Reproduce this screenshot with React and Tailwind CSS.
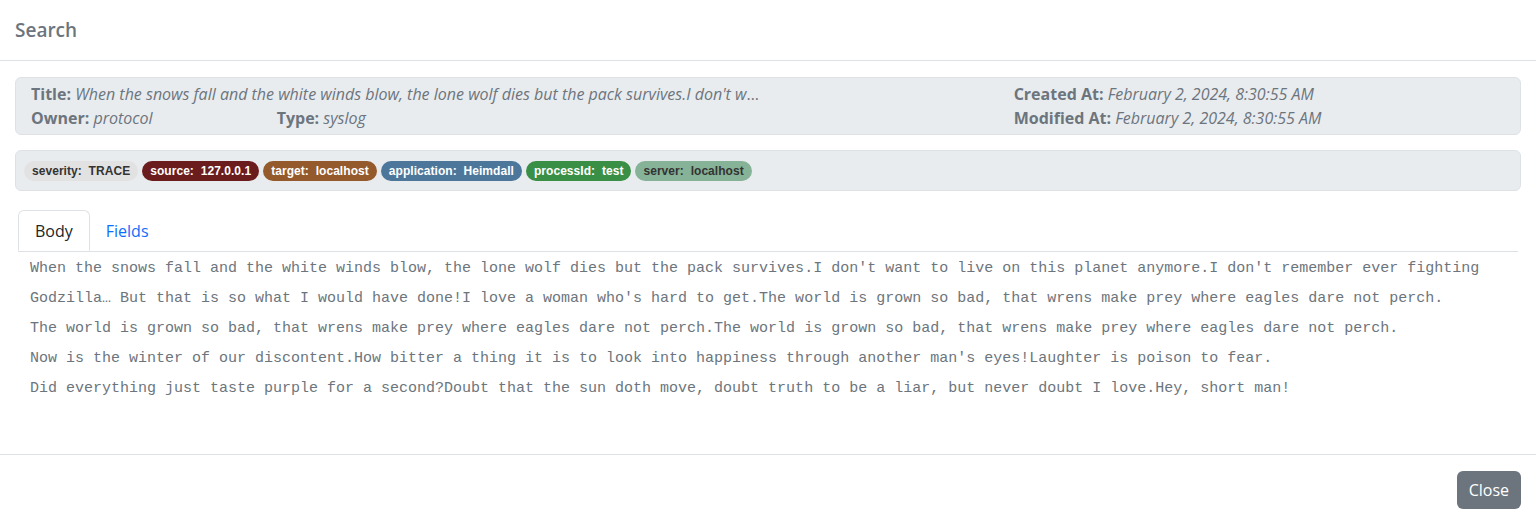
import React from 'react';

const tags = [
  { key: 'severity', value: 'TRACE', cls: 'bg-[#e2e2e2] text-[#333]' },
  { key: 'source', value: '127.0.0.1', cls: 'bg-[#6b1c1c] text-white' },
  { key: 'target', value: 'localhost', cls: 'bg-[#955a2c] text-white' },
  { key: 'application', value: 'Heimdall', cls: 'bg-[#4c779b] text-white' },
  { key: 'processId', value: 'test', cls: 'bg-[#3a8f46] text-white' },
  { key: 'server', value: 'localhost', cls: 'bg-[#86b297] text-[#333]' },
];

const bodyLines = [
  "When the snows fall and the white winds blow, the lone wolf dies but the pack survives.I don't want to live on this planet anymore.I don't remember ever fighting",
  "Godzilla\u2026 But that is so what I would have done!I love a woman who's hard to get.The world is grown so bad, that wrens make prey where eagles dare not perch.",
  'The world is grown so bad, that wrens make prey where eagles dare not perch.The world is grown so bad, that wrens make prey where eagles dare not perch.',
  "Now is the winter of our discontent.How bitter a thing it is to look into happiness through another man's eyes!Laughter is poison to fear.",
  'Did everything just taste purple for a second?Doubt that the sun doth move, doubt truth to be a liar, but never doubt I love.Hey, short man!',
];

const App = () => {
  return (
    <div className="w-[1536px] h-[524px] bg-white flex flex-col font-['Open_Sans','Noto_Sans',sans-serif] text-[#6c757d] overflow-hidden">
      {/* Header */}
      <div className="h-[61px] px-[15px] flex items-center border-b border-[#dee2e6]">
        <h5 className="text-[19px] font-semibold leading-none">Search</h5>
      </div>

      {/* Body */}
      <div className="flex-1 px-[15px] pt-[16px]">
        <div className="bg-[#e9ecef] border border-[#dee2e6] rounded-[6px] px-[15px] py-[4px] text-[16px] leading-[24px]">
          <div className="grid grid-cols-12">
            <div className="col-span-6 truncate pr-1">
              <span className="font-bold">Title: </span>
              <em>When the snows fall and the white winds blow, the lone wolf dies but the pack survives.I don't want to live on this planet anymore.</em>
            </div>
            <div className="col-span-2" />
            <div className="col-span-4">
              <span className="font-bold">Created At: </span>
              <em>February 2, 2024, 8:30:55 AM</em>
            </div>
            <div className="col-span-2">
              <span className="font-bold">Owner: </span>
              <em>protocol</em>
            </div>
            <div className="col-span-6">
              <span className="font-bold">Type: </span>
              <em>syslog</em>
            </div>
            <div className="col-span-4">
              <span className="font-bold">Modified At: </span>
              <em>February 2, 2024, 8:30:55 AM</em>
            </div>
          </div>
        </div>

        <div className="mt-[15px] h-[41px] bg-[#e9ecef] border border-[#dee2e6] rounded-[6px] px-[8px] flex items-center gap-[4px]">
          {tags.map((t) => (
            <span
              key={t.key}
              className={`h-[20px] px-[8px] rounded-full flex items-center text-[12px] font-bold tracking-[0.05px] font-['Liberation_Sans',sans-serif] whitespace-pre ${t.cls}`}
            >
              {t.key}:  {t.value}
            </span>
          ))}
        </div>

        {/* Tabs */}
        <div className="mt-[19px] mx-[3px] flex border-b border-[#dee2e6] text-[16px]">
          <div className="h-[41px] px-[16px] flex items-center border border-[#dee2e6] border-b-white -mb-px rounded-t-[6px] bg-white text-[#212529]">
            Body
          </div>
          <div className="h-[41px] px-[16px] flex items-center text-[#0d6efd]">Fields</div>
        </div>

        <div className="pl-[15px] pt-[2px] font-['Liberation_Mono',monospace] text-[15px] leading-[30px] text-[#6c757d]">
          {bodyLines.map((l, i) => (
            <div key={i} className="whitespace-pre">{l}</div>
          ))}
        </div>
      </div>

      {/* Footer */}
      <div className="h-[70px] border-t border-[#dee2e6] flex items-center justify-end px-[15px]">
        <button className="h-[38px] px-[12px] rounded-[6px] bg-[#6c757d] text-white text-[16px]">Close</button>
      </div>
    </div>
  );
};

export default App;
